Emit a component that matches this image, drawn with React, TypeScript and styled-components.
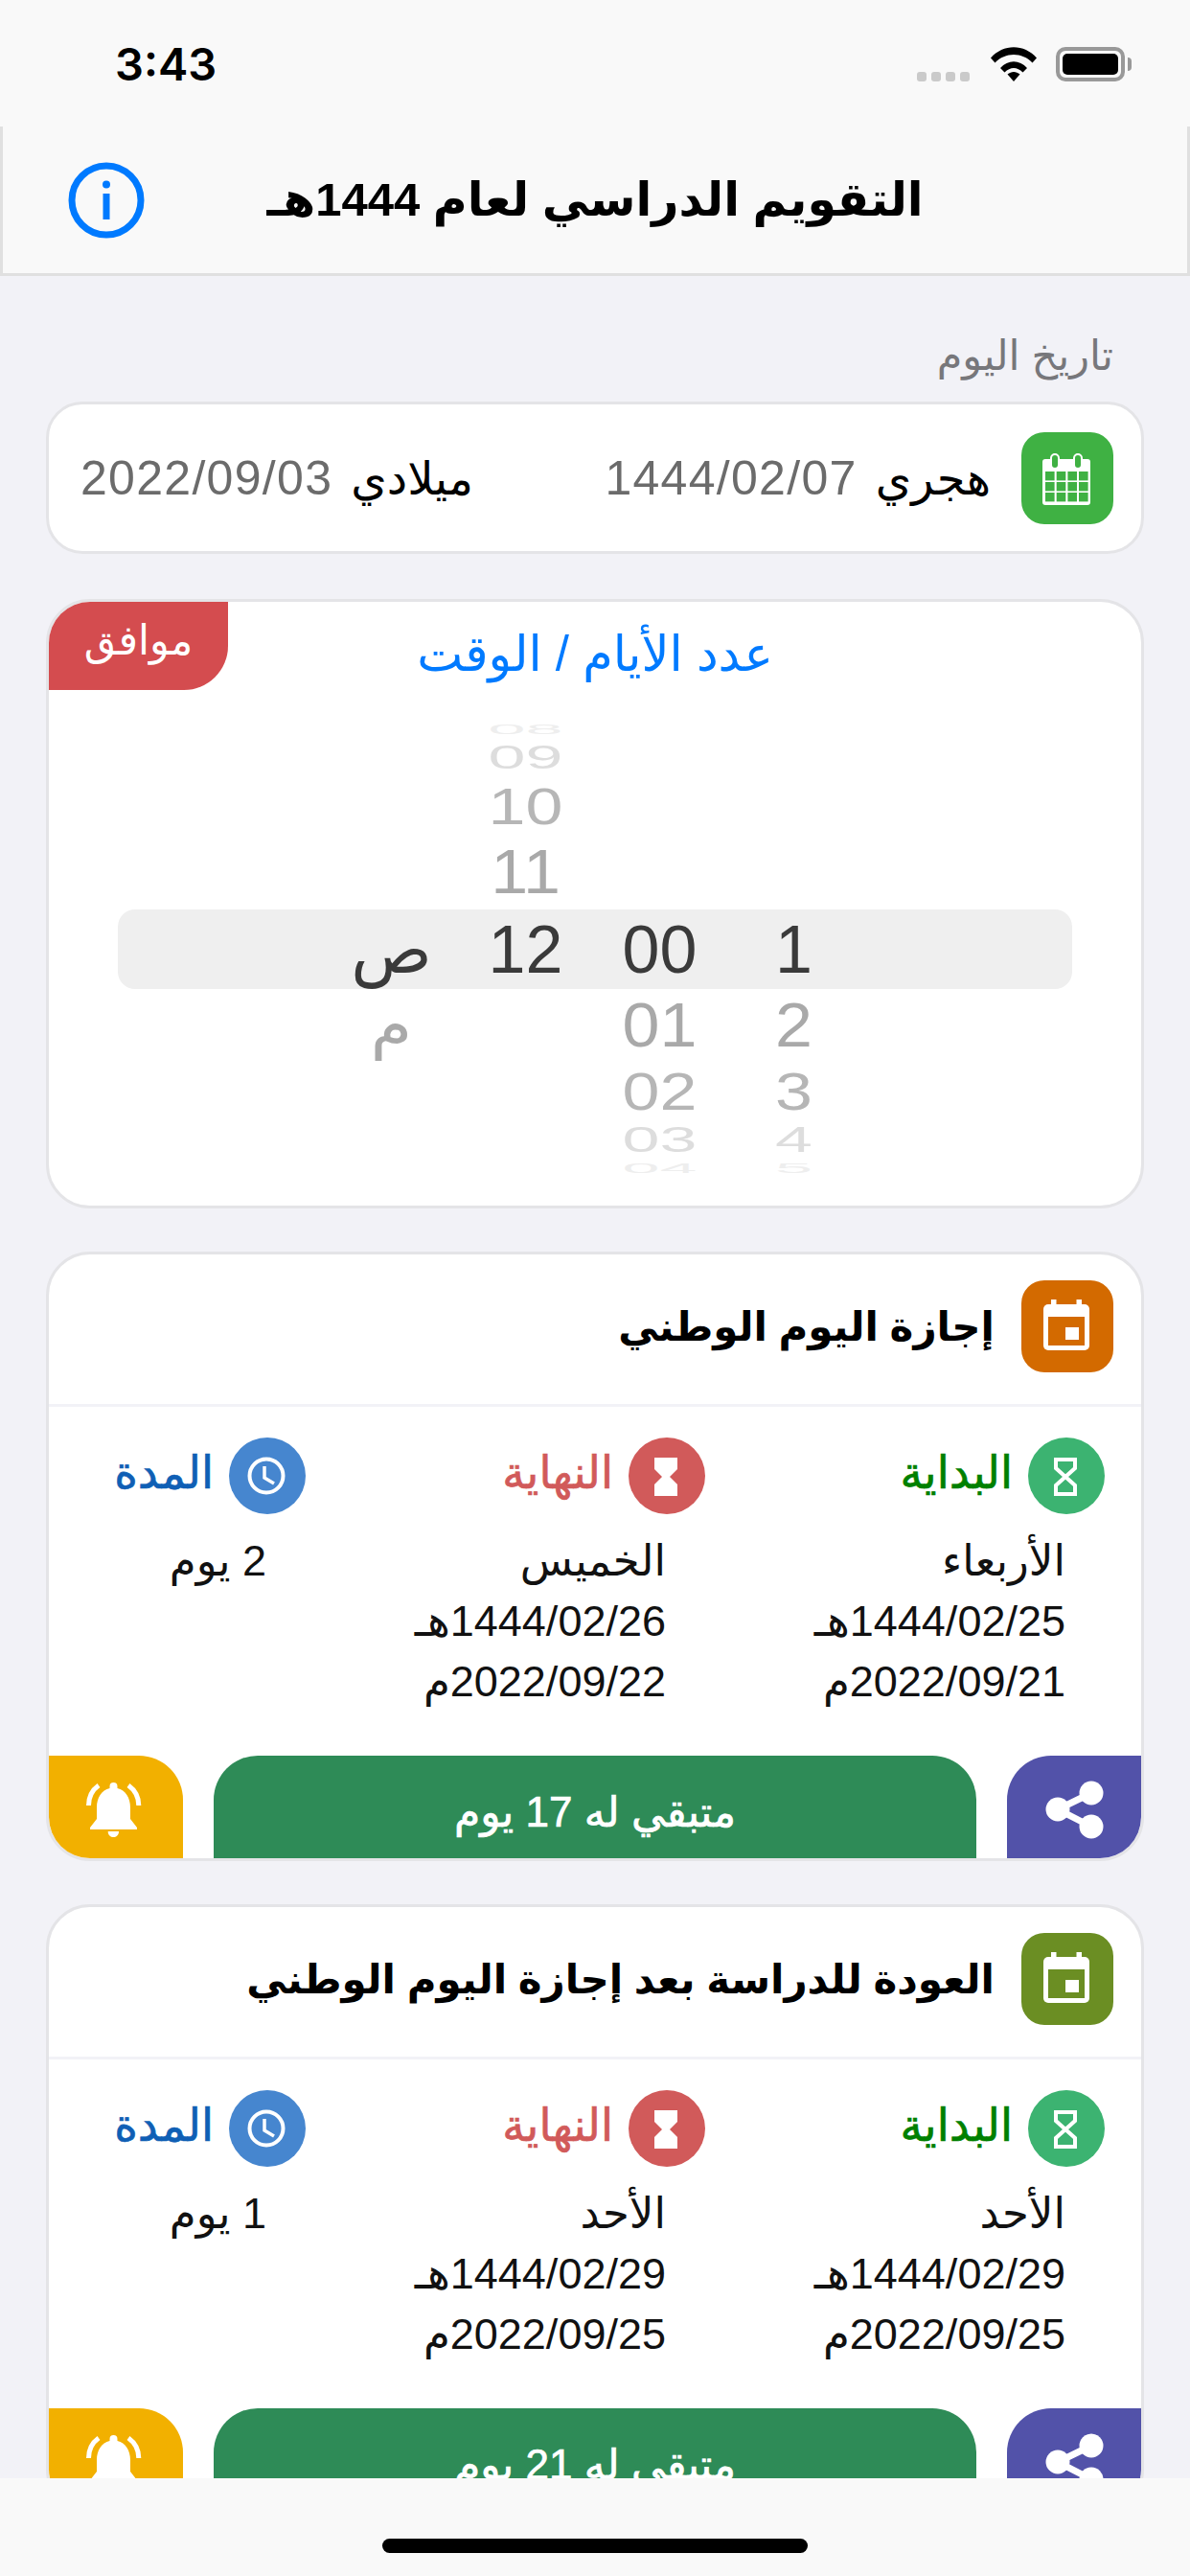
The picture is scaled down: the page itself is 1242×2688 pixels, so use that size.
import styled, { createGlobalStyle } from 'styled-components';

const GlobalStyle = createGlobalStyle`
  html, body { margin: 0; padding: 0; background: #f2f2f7; }
  * { box-sizing: border-box; }
`;

const fontStack = `"Liberation Sans", "DejaVu Sans", "Noto Sans", sans-serif`;

const Phone = styled.div`
  width: 1242px;
  height: 2688px;
  display: flex;
  flex-direction: column;
  overflow: hidden;
  background: #f2f2f7;
  font-family: ${fontStack};
  color: #000;
`;

/* status bar */
const StatusBar = styled.div`
  height: 132px;
  flex-shrink: 0;
  background: #f9f9f9;
  display: flex;
  justify-content: space-between;
  align-items: flex-start;
  padding: 38px 68px 0 120px;
`;

const Clock = styled.div`
  font-family: Inter, sans-serif;
  font-size: 47px;
  font-weight: 600;
  line-height: 58px;
`;

const StatusIcons = styled.div`
  display: flex;
  align-items: flex-start;
  padding-top: 11px;
`;

const SignalDots = styled.div`
  display: flex;
  gap: 5px;
  margin: 26px 22px 0 0;
`;

const SignalDot = styled.div`
  width: 10px;
  height: 10px;
  border-radius: 3px;
  background: #cacaca;
`;

const BatteryShell = styled.div`
  width: 72px;
  height: 36px;
  margin-left: 20px;
  padding: 3px;
  border: 4px solid #999;
  border-radius: 10px;
  position: relative;
  &::after {
    content: '';
    position: absolute;
    right: -11px;
    top: 7px;
    width: 4px;
    height: 14px;
    border-radius: 0 4px 4px 0;
    background: #999;
  }
`;

const BatteryFill = styled.div`
  height: 100%;
  border-radius: 5px;
  background: #000;
`;

/* nav bar */
const NavBar = styled.div`
  height: 156px;
  flex-shrink: 0;
  background: #f9f9f9;
  border: 3px solid #e0e0e0;
  border-top: none;
  display: grid;
  grid-template-columns: 1fr auto 1fr;
  align-items: center;
`;

const NavTitle = styled.div`
  font-size: 49px;
  font-weight: 700;
  white-space: nowrap;
`;

const InfoButton = styled.div`
  justify-self: end;
  margin-left: 68px;
  height: 80px;
`;

/* scrolling content */
const Content = styled.div`
  flex: 1;
  min-height: 0;
  overflow: hidden;
  padding: 0 48px;
`;

const SectionLabel = styled.div`
  padding: 58px 32px 0 0;
  height: 131px;
  font-size: 43px;
  line-height: 50px;
  color: #77777b;
`;

const Card = styled.div<{ $height: number; $radius?: number; $after?: number }>`
  height: ${p => p.$height}px;
  background: #fff;
  border: 3px solid #e4e4e7;
  border-radius: ${p => p.$radius ?? 46}px;
  margin-bottom: ${p => p.$after ?? 45}px;
  overflow: hidden;
  position: relative;
`;

const TodayRow = styled.div`
  height: 100%;
  display: flex;
  align-items: center;
  padding: 0 29px 0 33px;
`;

const IconTile = styled.div<{ $bg: string }>`
  width: 96px;
  height: 96px;
  flex-shrink: 0;
  border-radius: 24px;
  background: ${p => p.$bg};
`;

const TodayGroup = styled.div<{ $last?: boolean }>`
  display: flex;
  align-items: center;
  gap: 19px;
  font-size: 48px;
  margin-right: ${p => (p.$last ? 'auto' : '32px')};
`;

const TodayValue = styled.span`
  font-size: 50px;
  letter-spacing: 1.3px;
  color: #6b6b6b;
`;

/* picker card */
const ConfirmBadge = styled.div`
  position: absolute;
  left: 0;
  top: 0;
  width: 187px;
  height: 92px;
  padding-bottom: 12px;
  background: #d44c4f;
  border-bottom-right-radius: 46px;
  color: #fff;
  font-size: 43px;
  display: flex;
  align-items: center;
  justify-content: center;
`;

const PickerTitle = styled.div`
  height: 127px;
  font-size: 51px;
  line-height: 110px;
  text-align: center;
  color: #007aff;
`;

const WheelArea = styled.div`
  position: relative;
`;

const WheelBand = styled.div`
  position: absolute;
  left: 72px;
  right: 72px;
  top: 194px;
  height: 83px;
  border-radius: 18px;
  background: #efefef;
`;

const Wheel = styled.div`
  position: relative;
  display: grid;
  grid-template-columns: repeat(4, 140px);
  justify-content: center;
  padding-right: 5px;
  direction: ltr;
`;

const WheelColumn = styled.div`
  display: flex;
  flex-direction: column;
`;

const WheelSlot = styled.div<{ $height: number; $scale: number; $tone: string }>`
  height: ${p => p.$height}px;
  display: flex;
  align-items: center;
  justify-content: center;
  font-size: 70px;
  line-height: 1;
  color: ${p => p.$tone};
  span { display: block; transform: scaleY(${p => p.$scale}); }
`;

/* event cards */
const EventHeader = styled.div`
  height: 159px;
  display: flex;
  align-items: center;
  gap: 28px;
  padding: 0 29px 6px 20px;
  border-bottom: 3px solid #f2f2f7;
`;

const EventTitle = styled.div`
  font-size: 42px;
  font-weight: 700;
  white-space: nowrap;
`;

const EventBody = styled.div`
  height: 364px;
  padding-top: 32px;
  display: grid;
  grid-template-columns: repeat(3, 417px);
  padding-right: 38px;
`;

const ColumnHead = styled.div`
  display: flex;
  align-items: center;
  gap: 16px;
`;

const HeadCircle = styled.div<{ $bg: string }>`
  width: 80px;
  height: 80px;
  border-radius: 50%;
  background: ${p => p.$bg};
`;

const HeadLabel = styled.div<{ $color: string }>`
  font-size: 47px;
  line-height: 70px;
  margin-top: -6px;
  -webkit-text-stroke: 0.7px ${p => p.$color};
  color: ${p => p.$color};
`;

const ColumnLines = styled.div`
  margin-top: 17px;
  padding-right: 41px;
  font-size: 45px;
  line-height: 63px;
  color: #111;
`;

const EventFooter = styled.div`
  height: 107px;
  display: grid;
  grid-template-columns: 140px 1fr 140px;
  gap: 32px;
`;

const SideAction = styled.div<{ $bg: string }>`
  background: ${p => p.$bg};
  border-radius: 46px 0 46px 0;
  &:last-child { border-radius: 0 46px 0 46px; }
`;

const RemainingButton = styled.div`
  background: #2e8b57;
  border-radius: 46px 46px 0 0;
  color: #fff;
  font-size: 44px;
  -webkit-text-stroke: 0.7px #fff;
  display: flex;
  align-items: center;
  justify-content: center;
  padding-top: 6px;
`;

/* home indicator */
const BottomBar = styled.div`
  height: 102px;
  flex-shrink: 0;
  background: #f9f9f9;
  display: flex;
  justify-content: center;
  padding-top: 63px;
  position: relative;
`;

const HomeIndicator = styled.div`
  width: 444px;
  height: 15px;
  border-radius: 8px;
  background: #000;
`;

/* icons */
const WifiIcon = () => (
  <svg width="48" height="36" viewBox="0 0 48 36">
    <path d="M0 11.5C13-3.5 35-3.5 48 11.5L43.5 16.5C33 5 15 5 4.5 16.5Z" />
    <path d="M10 22C18 13 30 13 38 22L33.5 26.5C27.5 20.5 20.5 20.5 14.5 26.5Z" />
    <path d="M17.5 28.5C21.5 25 26.5 25 30.5 28.5L24 36Z" />
  </svg>
);

const InfoIcon = () => (
  <svg width="80" height="80" viewBox="0 0 80 80" fill="none">
    <circle cx="40" cy="40" r="36" stroke="#007aff" strokeWidth="7" />
    <circle cx="40" cy="23.5" r="4" fill="#007aff" />
    <rect x="36.5" y="33" width="7" height="27" fill="#007aff" />
  </svg>
);

const CalendarGridIcon = () => (
  <svg width="96" height="96" viewBox="0 0 96 96">
    <rect x="22" y="28" width="50" height="48" rx="3" fill="#fff" />
    {[35, 59].map(x => (
      <rect key={x} x={x - 4} y="23" width="8" height="15" rx="4" fill="#3fb143" stroke="#fff" strokeWidth="2" />
    ))}
    {[41, 52, 63].map(y =>
      [25, 36.7, 48.4, 60].map(x => <rect key={`${x}-${y}`} x={x} y={y} width="9.6" height="9.4" fill="#3fb143" />)
    )}
  </svg>
);

const CalendarEventIcon = ({ bg }: { bg: string }) => (
  <svg width="96" height="96" viewBox="0 0 96 96">
    <rect x="31" y="20" width="5.5" height="8" fill="#fff" />
    <rect x="57.5" y="20" width="5.5" height="8" fill="#fff" />
    <rect x="23" y="25" width="48" height="48" rx="5" fill="#fff" />
    <rect x="28" y="38" width="38" height="30" fill={bg} />
    <rect x="46" y="49" width="14" height="13" fill="#fff" />
  </svg>
);

const HourglassOutlineIcon = () => (
  <svg width="80" height="80" viewBox="0 0 80 80" fill="none">
    <path d="M29 23H49V32L29 50V59H49V50L29 32Z" stroke="#fff" strokeWidth="4" />
  </svg>
);

const HourglassFilledIcon = () => (
  <svg width="80" height="80" viewBox="0 0 80 80">
    <path d="M27 21H51V33L43 41L51 49V61H27V49L35 41L27 33Z" fill="#fff" />
  </svg>
);

const ClockIcon = () => (
  <svg width="80" height="80" viewBox="0 0 80 80" fill="none" stroke="#fff">
    <circle cx="39" cy="40" r="17.5" strokeWidth="4" />
    <path d="M37 30V42L47 48" strokeWidth="3.5" />
  </svg>
);

const BellIcon = () => (
  <svg width="140" height="107" viewBox="0 0 140 107">
    <path
      d="M67.5 28a4 4 0 0 1 4 4v2C80 36 85 44 85 54V66L92 75V77H43V75L50 66V54C50 44 55 36 63.5 34V32a4 4 0 0 1 4-4Z"
      fill="#fff"
    />
    <path d="M61.7 79H73C73 87 61.7 87 61.7 79Z" fill="#fff" />
    <path d="M41.5 52C41.5 43 45 36 52 31M93.8 52C93.8 43 90 36 83 31" fill="none" stroke="#fff" strokeWidth="5" />
  </svg>
);

const ShareIcon = () => (
  <svg width="140" height="107" viewBox="0 0 140 107" fill="#fff">
    <path d="M88 39L53 56L88 74" fill="none" stroke="#fff" strokeWidth="7" />
    <circle cx="88" cy="39" r="12.5" />
    <circle cx="53" cy="56" r="12.5" />
    <circle cx="88" cy="74" r="12.5" />
  </svg>
);

/* wheel slot geometry, top row to bottom row */
const slotHeights = [12, 46, 58, 78, 83, 75, 63, 40, 18];
const slotScales = [0.22, 0.5, 0.76, 0.92, 1, 0.92, 0.78, 0.52, 0.22];
const slotTones = ['#eeeeee', '#dddddd', '#b6b6b6', '#a9a9a9', '#3a3a3a', '#a9a9a9', '#b6b6b6', '#dddddd', '#eeeeee'];

const wheelColumns: string[][] = [
  ['', '', '', '', 'ص', 'م', '', '', ''],
  ['08', '09', '10', '11', '12', '', '', '', ''],
  ['', '', '', '', '00', '01', '02', '03', '04'],
  ['', '', '', '', '1', '2', '3', '4', '5'],
];

type EventData = {
  title: string;
  tile: string;
  start: string[];
  end: string[];
  duration: string;
  remaining: string;
};

const events: EventData[] = [
  {
    title: 'إجازة اليوم الوطني',
    tile: '#d36a00',
    start: ['الأربعاء', '1444/02/25هـ', '2022/09/21م'],
    end: ['الخميس', '1444/02/26هـ', '2022/09/22م'],
    duration: '2 يوم',
    remaining: 'متبقي له 17 يوم',
  },
  {
    title: 'العودة للدراسة بعد إجازة اليوم الوطني',
    tile: '#6b8e23',
    start: ['الأحد', '1444/02/29هـ', '2022/09/25م'],
    end: ['الأحد', '1444/02/29هـ', '2022/09/25م'],
    duration: '1 يوم',
    remaining: 'متبقي له 21 يوم',
  },
];

function EventCard({ event }: { event: EventData }) {
  return (
    <Card $height={636}>
      <EventHeader>
        <IconTile $bg={event.tile}><CalendarEventIcon bg={event.tile} /></IconTile>
        <EventTitle>{event.title}</EventTitle>
      </EventHeader>
      <EventBody>
        <div>
          <ColumnHead>
            <HeadCircle $bg="#3cb371"><HourglassOutlineIcon /></HeadCircle>
            <HeadLabel $color="#008000">البداية</HeadLabel>
          </ColumnHead>
          <ColumnLines>{event.start.map(line => <div key={line}>{line}</div>)}</ColumnLines>
        </div>
        <div>
          <ColumnHead>
            <HeadCircle $bg="#d15a5a"><HourglassFilledIcon /></HeadCircle>
            <HeadLabel $color="#d15a5a">النهاية</HeadLabel>
          </ColumnHead>
          <ColumnLines>{event.end.map(line => <div key={line}>{line}</div>)}</ColumnLines>
        </div>
        <div>
          <ColumnHead>
            <HeadCircle $bg="#4686cf"><ClockIcon /></HeadCircle>
            <HeadLabel $color="#0f5fb5">المدة</HeadLabel>
          </ColumnHead>
          <ColumnLines>{event.duration}</ColumnLines>
        </div>
      </EventBody>
      <EventFooter>
        <SideAction $bg="#5252a9"><ShareIcon /></SideAction>
        <RemainingButton>{event.remaining}</RemainingButton>
        <SideAction $bg="#f2b000"><BellIcon /></SideAction>
      </EventFooter>
    </Card>
  );
}

export default function App() {
  return (
    <Phone dir="rtl">
      <GlobalStyle />
      <StatusBar dir="ltr">
        <Clock>3:43</Clock>
        <StatusIcons>
          <SignalDots>{[0, 1, 2, 3].map(i => <SignalDot key={i} />)}</SignalDots>
          <WifiIcon />
          <BatteryShell><BatteryFill /></BatteryShell>
        </StatusIcons>
      </StatusBar>

      <NavBar>
        <div />
        <NavTitle>التقويم الدراسي لعام 1444هـ</NavTitle>
        <InfoButton><InfoIcon /></InfoButton>
      </NavBar>

      <Content>
        <SectionLabel>تاريخ اليوم</SectionLabel>
        <Card $height={159} $radius={38} $after={47}>
          <TodayRow>
            <IconTile $bg="#3fb143"><CalendarGridIcon /></IconTile>
            <TodayGroup>
              <span>هجري</span>
              <TodayValue>1444/02/07</TodayValue>
            </TodayGroup>
            <TodayGroup $last>
              <span>ميلادي</span>
              <TodayValue>2022/09/03</TodayValue>
            </TodayGroup>
          </TodayRow>
        </Card>

        <Card $height={636}>
          <ConfirmBadge>موافق</ConfirmBadge>
          <PickerTitle>عدد الأيام / الوقت</PickerTitle>
          <WheelArea>
            <WheelBand />
            <Wheel>
              {wheelColumns.map((column, c) => (
                <WheelColumn key={c}>
                  {column.map((value, i) => (
                    <WheelSlot key={i} $height={slotHeights[i]} $scale={slotScales[i]} $tone={slotTones[i]}>
                      <span>{value}</span>
                    </WheelSlot>
                  ))}
                </WheelColumn>
              ))}
            </Wheel>
          </WheelArea>
        </Card>

        {events.map(event => <EventCard key={event.title} event={event} />)}
      </Content>

      <BottomBar><HomeIndicator /></BottomBar>
    </Phone>
  );
}
